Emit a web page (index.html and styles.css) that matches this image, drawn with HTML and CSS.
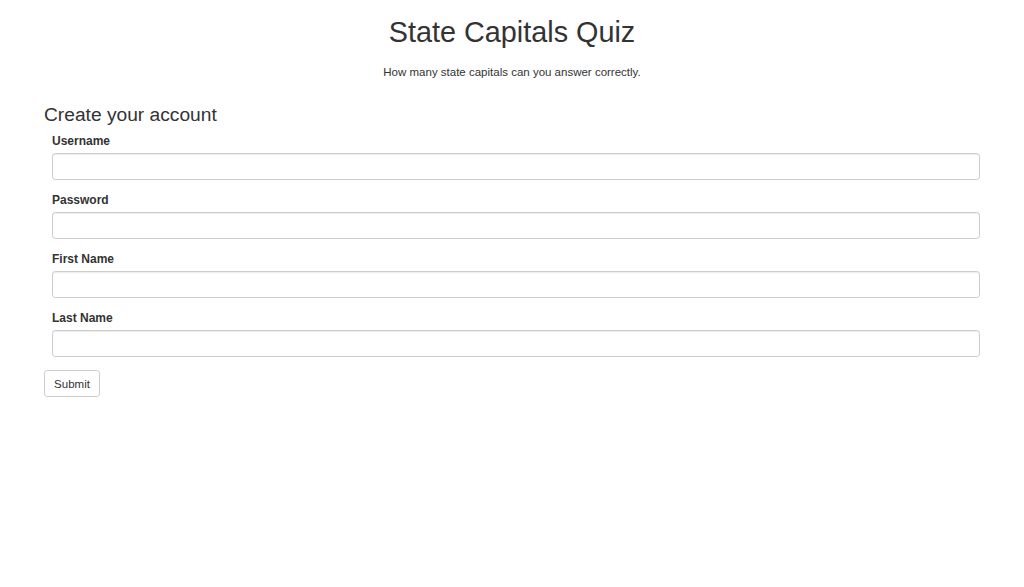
FILE: index.html
```html
<!DOCTYPE html>
<html lang="en">
<head>
<meta charset="utf-8">
<title>State Capitals Quiz</title>
<link rel="stylesheet" href="styles.css">
</head>
<body>
<div class="container">
  <header class="header">
    <h1 class="title">State Capitals Quiz</h1>
    <p class="lead-text">How many state capitals can you answer correctly.</p>
  </header>
  <form class="signup">
    <h3 class="form-title">Create your account</h3>
    <div class="form-group">
      <label class="field-label" for="username">Username</label>
      <input class="field-input" id="username" type="text">
    </div>
    <div class="form-group">
      <label class="field-label" for="password">Password</label>
      <input class="field-input" id="password" type="password">
    </div>
    <div class="form-group">
      <label class="field-label" for="first">First Name</label>
      <input class="field-input" id="first" type="text">
    </div>
    <div class="form-group">
      <label class="field-label" for="last">Last Name</label>
      <input class="field-input" id="last" type="text">
    </div>
    <button class="btn" type="button">Submit</button>
  </form>
</div>
</body>
</html>
```

FILE: styles.css
```css
html, body {
  margin: 0;
  padding: 0;
  background: #fff;
}
body {
  font-family: "Liberation Sans", Arial, Helvetica, sans-serif;
  color: #333;
  font-size: 11.2px;
  line-height: 16px;
}
.container {
  padding: 0 44px;
}
.header {
  text-align: center;
}
.title {
  font-size: 28.8px;
  font-weight: 500;
  line-height: 32px;
  margin: 16px 0 0;
}
.lead-text {
  font-size: 11.5px;
  line-height: 16px;
  margin: 16px 0 0;
}
.signup {
  display: flex;
  flex-direction: column;
  margin: 0;
}
.form-title {
  font-size: 19.2px;
  font-weight: 500;
  line-height: 21px;
  margin: 24px 0 8px;
}
.form-group {
  display: flex;
  flex-direction: column;
  margin: 0 0 12px 8px;
}
.field-label {
  font-weight: 700;
  font-size: 12px;
  line-height: 16px;
  margin-bottom: 4px;
}
.field-input {
  box-sizing: border-box;
  height: 27px;
  width: 100%;
  margin: 0;
  padding: 4.8px 9.6px;
  border: 1px solid #ccc;
  border-radius: 3.2px;
  background: #fff;
  box-shadow: inset 0 1px 1px rgba(0,0,0,.075);
  font-family: inherit;
  font-size: 11.2px;
}
.btn {
  align-self: flex-start;
  box-sizing: border-box;
  height: 27px;
  width: 56px;
  padding: 0;
  margin: 1px 0 0;
  border: 1px solid #ccc;
  border-radius: 3.2px;
  background: #fff;
  color: #333;
  font-family: inherit;
  font-size: 11.5px;
  line-height: 16px;
}
```
